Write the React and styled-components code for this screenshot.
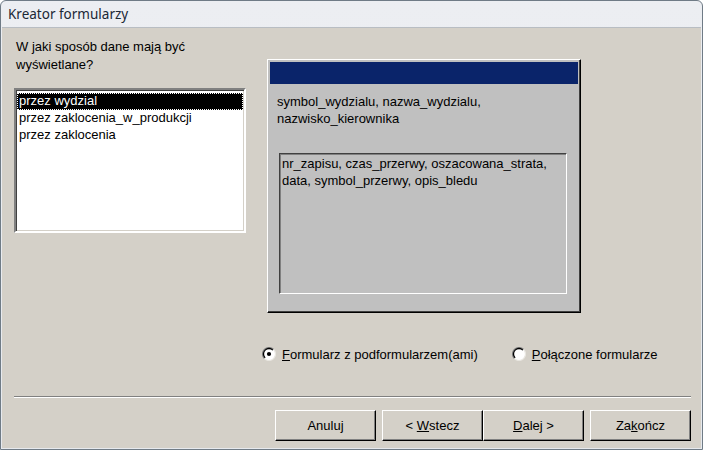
import React from "react";
import styled, { createGlobalStyle } from "styled-components";

const Global = createGlobalStyle`
  html, body {
    margin: 0;
    padding: 0;
    background: #ffffff;
  }
  body {
    width: 703px;
    height: 450px;
    overflow: hidden;
    font-family: "Liberation Sans", Arial, sans-serif;
  }
`;

const Window = styled.div`
  width: 703px;
  height: 450px;
  box-sizing: border-box;
  border: 1px solid #6f7b86;
  border-radius: 6px 6px 0 0;
  background: linear-gradient(#eceef2, #e6e9ee);
  display: flex;
  flex-direction: column;
  overflow: hidden;
`;

const TitleBar = styled.div`
  height: 26px;
  flex: none;
  display: flex;
  align-items: center;
  padding-left: 7px;
  font-family: "Noto Sans", "Open Sans", sans-serif;
  font-size: 13.5px;
  color: #1b2836;
`;

const Body = styled.div`
  flex: 1;
  margin: 0 1px 1px;
  padding: 0 10px 0 12px;
  background: #d4d0c8;
  border-top: 1px solid #b8bdc3;
  display: flex;
  flex-direction: column;
  font-size: 13px;
  color: #000;
`;

const TopRow = styled.div`
  display: flex;
  align-items: flex-start;
`;

const LeftCol = styled.div`
  width: 232px;
  padding-top: 10px;
`;

const Question = styled.div`
  height: 50px;
  padding-left: 2px;
  line-height: 18px;
`;

const ListBox = styled.div`
  width: 232px;
  height: 145px;
  box-sizing: border-box;
  background: #ffffff;
  border: 2px solid;
  border-color: #808080 #ffffff #ffffff #808080;
  box-shadow: inset 1px 1px 0 #404040, inset -1px -1px 0 #d4d0c8;
  padding: 3px 1px;
`;

const ListItem = styled.div`
  height: 17px;
  line-height: 16px;
  padding-left: 2px;
  white-space: nowrap;
  background: ${(p) => (p.$selected ? "#000000" : "transparent")};
  color: ${(p) => (p.$selected ? "#ffffff" : "#000000")};
  outline: ${(p) => (p.$selected ? "1px dotted #ffffff" : "none")};
  outline-offset: -1px;
`;

const Panel = styled.div`
  margin: 31px 0 0 21px;
  width: 314px;
  height: 254px;
  box-sizing: border-box;
  background: #c0c0c0;
  border: 1px solid;
  border-color: #ffffff #000000 #000000 #ffffff;
  box-shadow: inset -1px -1px 0 #404040;
  padding: 2px;
`;

const HeaderBar = styled.div`
  height: 22px;
  background: #0a246a;
`;

const MainFields = styled.div`
  margin-top: 9px;
  padding-left: 7px;
  line-height: 17px;
  color: #000;
`;

const SubForm = styled.div`
  margin: 26px 0 0 9px;
  width: 288px;
  height: 141px;
  box-sizing: border-box;
  border: 1px solid;
  border-color: #404040 #ffffff #ffffff #404040;
  box-shadow: inset 1px 1px 0 #808080;
  padding: 1px 2px;
  line-height: 17px;
`;

const RadioRow = styled.div`
  display: flex;
  align-items: center;
  gap: 34px;
  margin: 34px 0 0 248px;
  height: 14px;
`;

const RadioOption = styled.label`
  display: flex;
  align-items: center;
  gap: 6px;
  white-space: nowrap;
`;

const Separator = styled.div`
  margin-top: 35px;
  height: 1px;
  background: #808080;
  border-bottom: 1px solid #ffffff;
`;

const ButtonRow = styled.div`
  margin-top: 12px;
  display: flex;
  justify-content: flex-end;
`;

const Group = styled.div`
  display: flex;
  margin-left: ${(p) => (p.$first ? "0" : "6px")};
`;

const Button = styled.button`
  width: 101px;
  height: 31px;
  box-sizing: border-box;
  background: #d4d0c8;
  border: 1px solid;
  border-color: #ffffff #000000 #000000 #ffffff;
  box-shadow: inset -1px -1px 0 #808080;
  font-family: "Liberation Sans", Arial, sans-serif;
  font-size: 13px;
  color: #000;
  padding: 0;
`;

const Key = styled.span`
  text-decoration: underline;
`;

const Radio = ({ checked }) => (
  <svg width="14" height="14" viewBox="0 0 14 14">
    <circle cx="7" cy="7" r="6.5" fill="#ffffff" />
    <path d="M2.4 11.6 A6.5 6.5 0 0 1 11.6 2.4" fill="none" stroke="#808080" strokeWidth="1.2" />
    <path d="M3.1 10.9 A5.5 5.5 0 0 1 10.9 3.1" fill="none" stroke="#000000" strokeWidth="1.3" />
    <path d="M11.6 2.4 A6.5 6.5 0 0 1 2.4 11.6" fill="none" stroke="#e8e6e0" strokeWidth="1.2" />
    {checked && <circle cx="7" cy="7" r="2.1" fill="#000000" />}
  </svg>
);

const items = ["przez wydzial", "przez zaklocenia_w_produkcji", "przez zaklocenia"];

export default function App() {
  return (
    <>
      <Global />
      <Window>
        <TitleBar>Kreator formularzy</TitleBar>
        <Body>
          <TopRow>
            <LeftCol>
              <Question>
                W jaki sposób dane mają być
                <br />
                wyświetlane?
              </Question>
              <ListBox>
                {items.map((it, i) => (
                  <ListItem key={it} $selected={i === 0}>
                    {it}
                  </ListItem>
                ))}
              </ListBox>
            </LeftCol>
            <Panel>
              <HeaderBar />
              <MainFields>
                symbol_wydzialu, nazwa_wydzialu,
                <br />
                nazwisko_kierownika
              </MainFields>
              <SubForm>
                nr_zapisu, czas_przerwy, oszacowana_strata,
                <br />
                data, symbol_przerwy, opis_bledu
              </SubForm>
            </Panel>
          </TopRow>
          <RadioRow>
            <RadioOption>
              <Radio checked />
              <span>
                <Key>F</Key>ormularz z podformularzem(ami)
              </span>
            </RadioOption>
            <RadioOption>
              <Radio />
              <span>
                <Key>P</Key>ołączone formularze
              </span>
            </RadioOption>
          </RadioRow>
          <Separator />
          <ButtonRow>
            <Group $first>
              <Button>Anuluj</Button>
            </Group>
            <Group>
              <Button>
                &lt; <Key>W</Key>stecz
              </Button>
              <Button>
                <Key>D</Key>alej &gt;
              </Button>
            </Group>
            <Group>
              <Button>
                Za<Key>k</Key>ończ
              </Button>
            </Group>
          </ButtonRow>
        </Body>
      </Window>
    </>
  );
}
